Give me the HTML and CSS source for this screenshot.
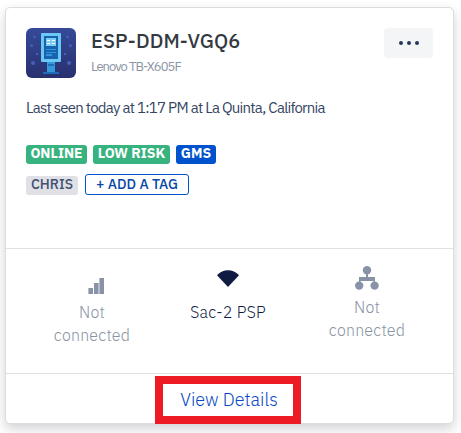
FILE: index.html
```html
<!DOCTYPE html>
<html lang="en">
<head>
<meta charset="utf-8">
<title>Device</title>
<link rel="stylesheet" href="styles.css">
</head>
<body>
<article class="card">
  <section class="summary">
    <header class="head">
      <svg class="avatar" viewBox="0 0 50 50" width="50" height="50">
        <defs><linearGradient id="bg" x1="0" y1="0" x2="0" y2="1"><stop offset="0" stop-color="#354a98"/><stop offset="1" stop-color="#29306f"/></linearGradient></defs>
        <rect width="50" height="50" rx="6" fill="url(#bg)"/>
        <g fill="#4561b5"><circle cx="8.500" cy="9" r="1.300"/><circle cx="41.500" cy="9" r="1.300"/><circle cx="5.500" cy="17.500" r="1.500"/><circle cx="44.500" cy="17.500" r="1.500"/><circle cx="11" cy="26" r="1.200"/><circle cx="39" cy="26" r="1.200"/><circle cx="7" cy="35" r="2.100"/><circle cx="43" cy="35" r="2.100"/></g>
        <path fill="#3498db" d="M21 34h8v10h-8z"/><path fill="#1d6db9" d="M22 36h6v2h-6zM17 44h16v2H17z"/>
        <rect x="15" y="5" width="20" height="29" rx="1" fill="#6bc7f3"/>
        <path fill="#1763b0" d="M18 8h14v23H18z"/>
        <path fill="#7dcdf2" d="M20 10h10v8H20z"/><path fill="#fff" d="M21 12h3v1h-3zM26 12h3v1h-3zM21 15h3v1h-3zM26 15h3v1h-3z"/>
        <path fill="#3494d8" d="M20 21h10v1H20zM20 24h10v1H20zM20 26h6v2h-6z"/>
      </svg>
      <div class="names">
        <h1 class="title">ESP-DDM-VGQ6</h1>
        <p class="model">Lenovo TB-X605F</p>
      </div>
      <button class="more" aria-label="More"><i></i><i></i><i></i></button>
    </header>
    <p class="seen">Last seen today at 1:17 PM at La Quinta, California</p>
    <div class="tags">
      <span class="tag green online">ONLINE</span>
      <span class="tag green risk">LOW RISK</span>
      <span class="tag blue">GMS</span>
    </div>
    <div class="tags second">
      <span class="tag gray">CHRIS</span>
      <button class="add">+ ADD A TAG</button>
    </div>
  </section>
  <section class="links">
    <div class="link cell">
      <svg width="16" height="16" viewBox="0 0 16 16"><path fill="#b8bdca" d="M0 10h5v6H0zM6 5h5v11H6zM11 0h5v16h-5z"/><path fill="#8993a8" d="M1 10h4v6H1zM6 5h4v11H6zM12 0h4v16h-4z"/></svg>
      <span class="label">Not<br>connected</span>
    </div>
    <div class="link wifi">
      <svg width="22" height="17" viewBox="0 0 22 17"><path fill="#101b42" d="M0 5.300C6-1.500 16-1.500 22 5.300L11 17z"/></svg>
      <span class="label">Sac-2 PSP</span>
    </div>
    <div class="link lan">
      <svg width="24" height="24" viewBox="0 0 24 24"><g fill="#8993a8"><circle cx="12" cy="4.200" r="4.200"/><circle cx="4.200" cy="19.600" r="4.200"/><circle cx="19.600" cy="19.600" r="4.200"/><path d="M11 7h2v4h7v6h-1.500v-2h-13v2H4v-6h7z"/></g></svg>
      <span class="label">Not<br>connected</span>
    </div>
  </section>
  <footer class="foot"><a class="details">View Details</a></footer>
</article>
</body>
</html>
```
FILE: styles.css
```css
* { box-sizing: border-box; }
body { margin: 0; padding: 7px 7px 0 5px; height: 433px; overflow: hidden; background: #fff; font-family: "IBM Plex Sans", Roboto, sans-serif; }
h1, p { margin: 0; }
button { font: inherit; padding: 0; border: 0; }
.card { width: 449px; height: 417px; border: 1px solid #dcdde0; border-radius: 5px; background: #fff; box-shadow: 0 5px 12px rgba(30, 35, 50, .2); }
.summary { height: 240px; padding: 20px 20px 0; }
.head { display: flex; height: 50px; }
.avatar { flex: none; }
.names { margin-left: 15px; }
.title { height: 28px; font-size: 20px; line-height: 26px; font-weight: 500; letter-spacing: .12px; color: #343942; white-space: nowrap; }
.model { margin-top: 3px; font-size: 13px; line-height: 16px; letter-spacing: -.95px; color: #8993a4; white-space: nowrap; }
.more { display: flex; justify-content: center; align-items: center; gap: 4px; margin-left: auto; width: 49px; height: 30px; border-radius: 4px; background: #f4f5f7; }
.more i { width: 4px; height: 4px; border-radius: 50%; background: #253858; }
.seen { margin-top: 20px; font-size: 15px; line-height: 20px; letter-spacing: -.76px; color: #344563; white-space: nowrap; }
.tags { display: flex; gap: 6px; height: 19px; margin-top: 27px; }
.tag { display: flex; justify-content: center; height: 19px; border-radius: 3px; font-size: 14px; line-height: 16px; font-weight: 700; color: #fff; white-space: nowrap; }
.green { background: #36b37e; }
.online { width: 61px; }
.risk { width: 77px; }
.blue { width: 40px; background: #0052cc; }
.second { height: 21px; margin-top: 10px; gap: 7px; align-items: flex-end; }
.gray { width: 52px; background: #dfe1e6; color: #42526e; font-weight: 500; }
.add { width: 104px; height: 21px; border: 1px solid #0052cc; border-radius: 3px; background: #fff; color: #0747a6; font-size: 14px; line-height: 19px; font-weight: 500; white-space: nowrap; }
.links { display: grid; grid-template-columns: 172px 103px 172px; height: 125px; border-top: 1px solid #dfe0e2; }
.link { display: flex; flex-direction: column; align-items: center; color: #8993a4; }
.link svg { flex: none; }
.label { font-size: 16px; line-height: 23px; letter-spacing: .2px; text-align: center; white-space: nowrap; font-weight: 300; }
.cell { padding: 29px 0 0; }
.cell svg { margin-left: 8px; }
.cell .label { margin-top: 7px; }
.wifi { padding-top: 21px; padding-right: 3px; color: #101b42; }
.wifi .label { margin-top: 14px; }
.lan { padding: 17px 0 0; }
.lan .label { margin-top: 6px; }
.foot { display: flex; justify-content: center; height: 51px; padding-top: 2px; border-top: 1px solid #dfe0e2; }
.details { width: 146px; height: 48px; margin-right: 3px; padding-left: 2px; border: 8px solid #ed1c24; font-size: 18px; line-height: 32px; font-weight: 300; text-align: center; color: #0747c6; }
```
